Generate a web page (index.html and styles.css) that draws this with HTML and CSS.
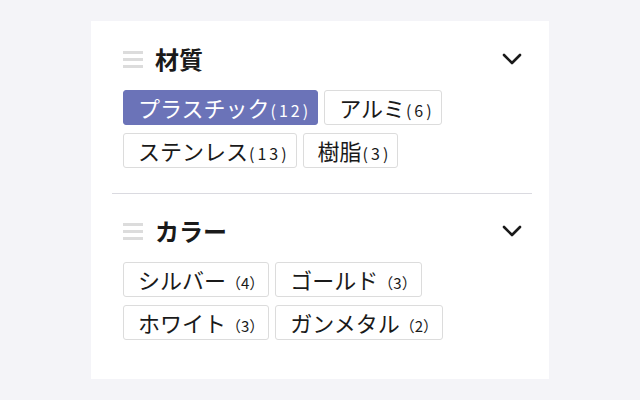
FILE: index.html
```html
<!DOCTYPE html>
<html lang="ja">
<head>
<meta charset="utf-8">
<link rel="stylesheet" href="styles.css">
</head>
<body>
<div class="card">
  <section class="group">
    <div class="head">
      <span class="handle"><i></i><i></i><i></i></span>
      <h2 class="title">材質</h2>
      <svg class="chev" width="20" height="12" viewBox="0 0 20 12"><path d="M2 2 L10 10 L18 2" fill="none" stroke="#1a1a1a" stroke-width="2.6" stroke-linecap="round" stroke-linejoin="round"/></svg>
    </div>
    <div class="chips">
      <span class="chip active">プラスチック<span class="count">(12)</span></span>
      <span class="chip">アルミ<span class="count">(6)</span></span>
      <span class="chip">ステンレス<span class="count">(13)</span></span>
      <span class="chip">樹脂<span class="count">(3)</span></span>
    </div>
  </section>
  <hr class="divider">
  <section class="group last">
    <div class="head">
      <span class="handle"><i></i><i></i><i></i></span>
      <h2 class="title">カラー</h2>
      <svg class="chev" width="20" height="12" viewBox="0 0 20 12"><path d="M2 2 L10 10 L18 2" fill="none" stroke="#1a1a1a" stroke-width="2.6" stroke-linecap="round" stroke-linejoin="round"/></svg>
    </div>
    <div class="chips">
      <span class="chip wide">シルバー<span class="count">（4）</span></span>
      <span class="chip wide">ゴールド<span class="count">（3）</span></span>
      <span class="chip wide">ホワイト<span class="count">（3）</span></span>
      <span class="chip wide">ガンメタル<span class="count">（2）</span></span>
    </div>
  </section>
</div>
</body>
</html>
```
FILE: styles.css
```css
html, body {
  margin: 0;
  padding: 0;
  background: #f4f4f8;
  font-family: "Noto Sans CJK JP", "Noto Sans", sans-serif;
  color: #1a1a1a;
}
.card {
  margin: 21px 0 0 91px;
  width: 458px;
  height: 358px;
  box-sizing: border-box;
  background: #fff;
  padding: 0 17px 0 21px;
}
.group {
  padding: 26px 10px 25px 11px;
}
.group.last {
  padding-top: 25px;
}
.head {
  display: flex;
  align-items: center;
  height: 24px;
}
.handle {
  display: flex;
  flex-direction: column;
  gap: 4px;
  width: 20px;
  margin-right: 12px;
}
.handle i {
  display: block;
  height: 3px;
  background: #dcdcdc;
}
.title {
  margin: 0;
  font-size: 24px;
  font-weight: 700;
  line-height: 24px;
  flex: 1;
}
.chev {
  display: block;
}
.chips {
  margin-top: 19px;
  display: flex;
  flex-wrap: wrap;
  gap: 8px 6px;
}
.chip {
  display: inline-flex;
  align-items: baseline;
  height: 35px;
  box-sizing: border-box;
  border: 1px solid #dcdcdc;
  border-radius: 3px;
  padding: 0 6px 0 14px;
  font-size: 22px;
  line-height: 33px;
  color: #1a1a1a;
  white-space: nowrap;
}
.chip.active {
  background: #6b73b8;
  border-color: #6b73b8;
  color: #fff;
}
.count {
  font-size: 16px;
  letter-spacing: 3px;
  margin-left: 1px;
}
.chip.wide {
  padding-right: 4px;
}
.chip.wide .count {
  font-size: 15px;
  letter-spacing: 0;
  margin-left: 0;
}
.divider {
  margin: 0;
  border: 0;
  height: 1px;
  background: #dadae0;
}
```
